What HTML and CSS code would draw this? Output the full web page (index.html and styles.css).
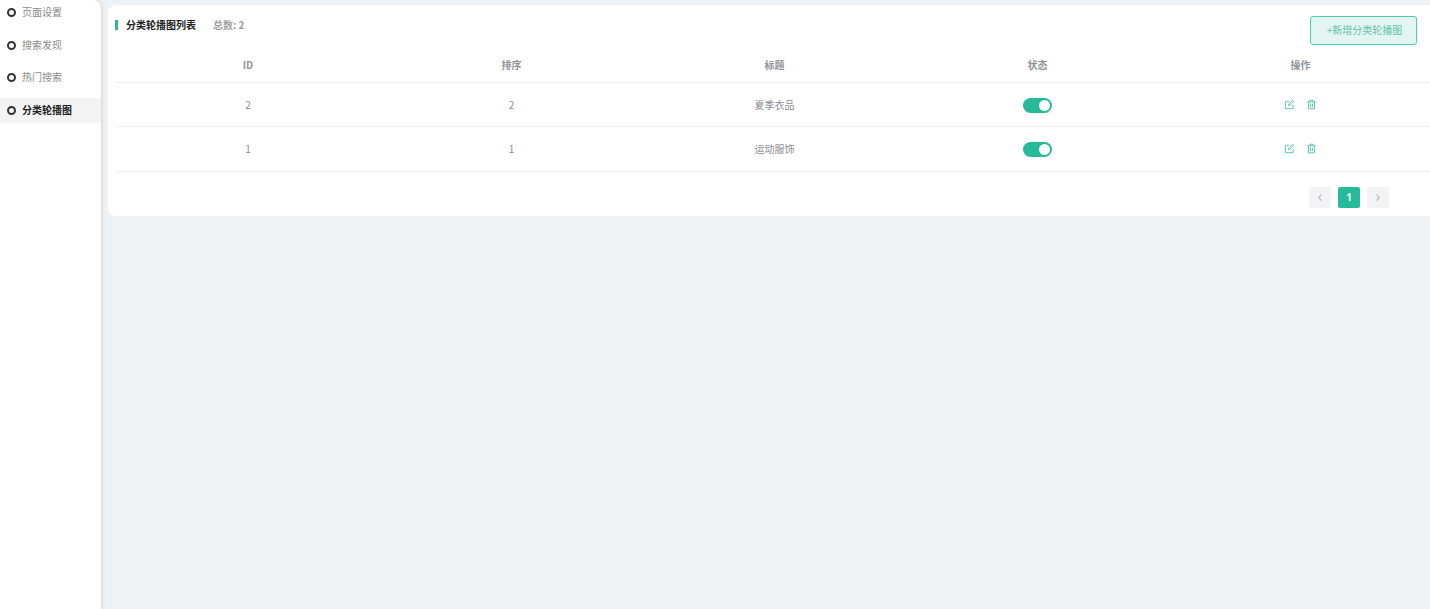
FILE: index.html
```html
<!DOCTYPE html>
<html lang="zh-CN">
<head>
    <meta charset="UTF-8">
    <title>分类轮播图</title>
    <link rel="stylesheet" href="styles.css">
</head>
<body>
    <div class="layout">
        <aside class="sidebar">
            <div class="menu-item"><span class="menu-dot"></span>页面设置</div>
            <div class="menu-item"><span class="menu-dot"></span>搜索发现</div>
            <div class="menu-item"><span class="menu-dot"></span>热门搜索</div>
            <div class="menu-item active"><span class="menu-dot"></span>分类轮播图</div>
        </aside>
        <main class="main">
            <section class="card">
                <div class="card-head">
                    <div class="card-title">分类轮播图列表</div>
                    <div class="card-total">总数: 2</div>
                    <button class="add-btn">+新增分类轮播图</button>
                </div>
                <div class="table">
                    <div class="row head">
                        <div>ID</div>
                        <div>排序</div>
                        <div>标题</div>
                        <div>状态</div>
                        <div>操作</div>
                    </div>
                    <div class="row">
                        <div>2</div>
                        <div>2</div>
                        <div>夏季衣品</div>
                        <div><span class="switch"></span></div>
                        <div class="actions">
                            <svg class="icon" viewBox="0 0 12 12"><path d="M10 6.5v4H1.5V2.5h4"/><path d="M5 7.2 5.4 5.4 9.4 1.4 10.7 2.7 6.7 6.7Z"/></svg>
                            <svg class="icon" viewBox="0 0 12 12"><path d="M1.5 3h9M4.3 3V1.3h3.4V3M2.7 3v7.7h6.6V3M4.8 4.8v4M7.2 4.8v4"/></svg>
                        </div>
                    </div>
                    <div class="row">
                        <div>1</div>
                        <div>1</div>
                        <div>运动服饰</div>
                        <div><span class="switch"></span></div>
                        <div class="actions">
                            <svg class="icon" viewBox="0 0 12 12"><path d="M10 6.5v4H1.5V2.5h4"/><path d="M5 7.2 5.4 5.4 9.4 1.4 10.7 2.7 6.7 6.7Z"/></svg>
                            <svg class="icon" viewBox="0 0 12 12"><path d="M1.5 3h9M4.3 3V1.3h3.4V3M2.7 3v7.7h6.6V3M4.8 4.8v4M7.2 4.8v4"/></svg>
                        </div>
                    </div>
                </div>
                <div class="pager">
                    <span class="page-btn">&#8249;</span>
                    <span class="page-btn current">1</span>
                    <span class="page-btn">&#8250;</span>
                </div>
            </section>
        </main>
    </div>
</body>
</html>
```

FILE: styles.css
```css
html, body {
    margin: 0;
    height: 100%;
    overflow: hidden;
}
body {
    font-family: "Noto Sans CJK SC", "Open Sans", sans-serif;
    font-size: 10px;
    color: #8a8d93;
    background-color: #eef2f5;
}
.layout {
    display: flex;
    height: 609px;
}
.sidebar {
    flex: 0 0 101px;
    display: flex;
    flex-direction: column;
    gap: 7.5px;
    background: white;
    border-top-right-radius: 8px;
    box-shadow: 1px 0 4px rgba(0, 0, 0, 0.12);
}
.menu-item {
    display: flex;
    align-items: center;
    box-sizing: border-box;
    height: 25px;
    padding: 0 0 2px 7px;
    line-height: 23px;
    color: #8a8a8a;
}
.menu-item.active {
    background-color: #f3f3f3;
    color: #222;
    font-weight: 700;
}
.menu-dot {
    box-sizing: border-box;
    width: 9px;
    height: 9px;
    margin: 2px 6px 0 0;
    border: 2px solid #333;
    border-radius: 50%;
}
.main {
    flex: 1;
    min-width: 0;
    padding: 5px 0 0 7px;
}
.card {
    height: 211px;
    box-sizing: border-box;
    padding: 11px 0 0 7px;
    overflow: hidden;
    background: white;
    border-radius: 8px 0 0 8px;
}
.card-head {
    display: flex;
    align-items: flex-start;
    height: 34px;
    padding-right: 13px;
}
.card-title {
    height: 10px;
    margin-top: 4px;
    padding-left: 8px;
    border-left: 3px solid #26b99a;
    line-height: 9px;
    color: #222;
    font-weight: 700;
}
.card-total {
    margin-left: 17px;
    line-height: 18px;
    color: #a0a0a0;
    font-weight: 700;
}
.add-btn {
    box-sizing: border-box;
    width: 107px;
    height: 29px;
    margin-left: auto;
    padding: 0 0 2px 2px;
    border: 1px solid #4fcdb0;
    border-radius: 3px;
    background-color: #e3f5f0;
    color: #62c1a9;
    font-family: inherit;
    font-size: 10px;
}
.table {
    width: 1316px;
    margin: -3px 0 0 1px;
}
.row {
    display: grid;
    grid-template-columns: 264px repeat(4, 263px);
    align-items: center;
    box-sizing: border-box;
    height: 44px;
    padding-bottom: 1px;
    border-bottom: 1px solid #eeeef3;
    text-align: center;
}
.row:last-child {
    height: 45px;
    padding-bottom: 2px;
}
.row.head {
    height: 36px;
    font-weight: 700;
    color: #909399;
}
.switch {
    position: relative;
    display: inline-block;
    width: 29px;
    height: 15px;
    margin-top: 2px;
    vertical-align: middle;
    border-radius: 8px;
    background-color: #26b99a;
}
.switch::after {
    content: "";
    position: absolute;
    top: 2px;
    right: 2px;
    width: 11px;
    height: 11px;
    border-radius: 50%;
    background: white;
}
.actions {
    display: flex;
    justify-content: center;
    gap: 11px;
}
.icon {
    width: 11px;
    height: 11px;
    fill: none;
    stroke: #4fc4ab;
    stroke-width: 1;
}
.pager {
    display: flex;
    justify-content: flex-end;
    gap: 7px;
    margin-top: 15px;
    padding-right: 41px;
}
.page-btn {
    width: 22px;
    height: 21px;
    border-radius: 2px;
    background-color: #f3f3f5;
    color: #b5b8c2;
    font-family: "Open Sans", sans-serif;
    font-size: 16px;
    line-height: 19px;
    text-align: center;
}
.page-btn.current {
    background-color: #26b99a;
    color: white;
    font-size: 10px;
    font-weight: 700;
    line-height: 21px;
}
```
